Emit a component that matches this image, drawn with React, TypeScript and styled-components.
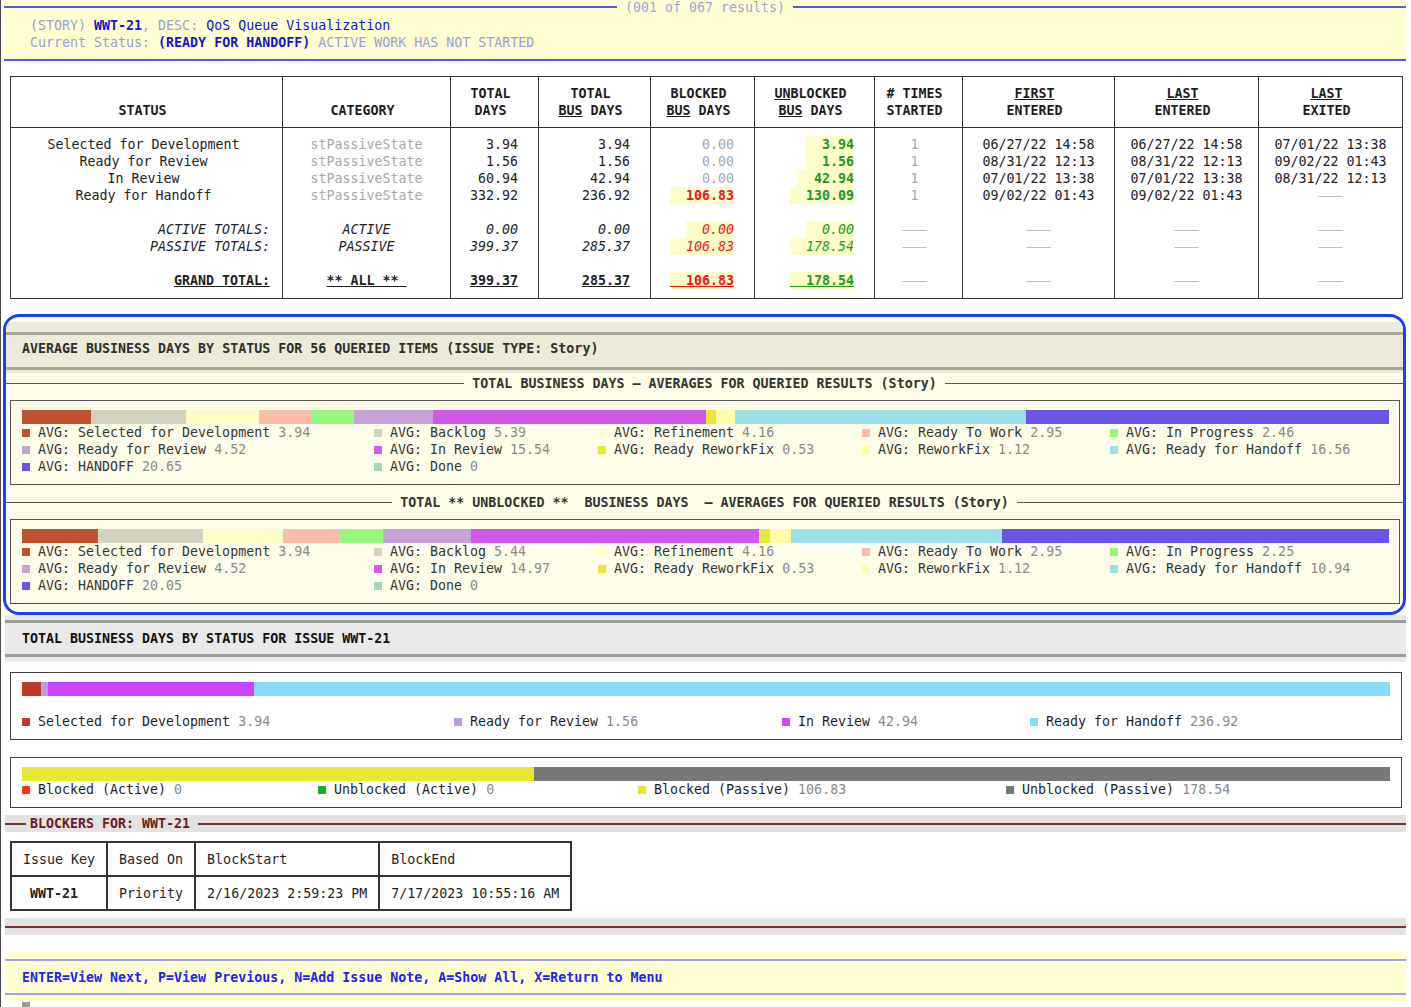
import React from "react";
import styled, { createGlobalStyle } from "styled-components";

const GlobalStyle = createGlobalStyle`
  html, body { margin: 0; padding: 0; background: #ffffff; overflow: hidden; }
  body {
    font-family: "DejaVu Sans Mono", "Liberation Mono", monospace;
    font-size: 13.3px;
    line-height: 17px;
    color: #222222;
  }
  *, *::before, *::after { box-sizing: border-box; }
`;

const Page = styled.div`
  width: 1411px;
  height: 1007px;
  overflow: hidden;
  border-left: 1px solid #4a4a4a;
  padding: 0 5px 0 3px;
`;

/* ---------- header ---------- */
const HeaderBand = styled.header`
  background: #ffffd3;
  padding-bottom: 3px;
`;
const ResultsRule = styled.div`
  display: flex;
  align-items: center;
  gap: 8px;
  height: 14px;
  color: #a3a3dc;
  white-space: pre;
  &::before, &::after {
    content: "";
    flex: 1 1 0;
    border-top: 2px solid #5a5ade;
  }
`;
const HeaderInfo = styled.div`
  padding: 2.5px 26px 8.5px;
  border-bottom: 2px solid #5a5ade;
  white-space: pre;
`;
const Dim = styled.span`
  color: #9d9dd6;
`;
const KeyText = styled.span`
  color: #1414cc;
  font-weight: bold;
`;
const BlueText = styled.span`
  color: #1414cc;
`;

/* ---------- stats table ---------- */
const StatsTable = styled.table`
  margin: 12px 0 0 6px;
  width: 1392px;
  table-layout: fixed;
  border-collapse: collapse;
  border: 1px solid #333;
  tbody tr:first-child td { padding-top: 8px; }
  tbody tr:last-child td { padding-bottom: 9px; }
`;
const HeadCell = styled.th`
  height: 51px;
  border: 1px solid #333;
  vertical-align: bottom;
  text-align: center;
  padding: 0 8px 8px 0;
  font-weight: bold;
  color: #1d1d1d;
`;
const U = styled.span`
  text-decoration: underline;
`;

type Align = "status" | "statusRight" | "center" | "num" | "times";
const BodyCell = styled.td<{ $align: Align }>`
  border-left: 1px solid #333;
  border-right: 1px solid #333;
  padding-top: 0;
  padding-bottom: 0;
  vertical-align: top;
  white-space: pre;
  text-align: ${(p) => (p.$align === "num" || p.$align === "statusRight" ? "right" : "center")};
  padding-left: ${(p) => (p.$align === "status" ? "6px" : "0")};
  padding-right: ${(p) =>
    p.$align === "num" ? "20px" : p.$align === "status" || p.$align === "statusRight" ? "12px" : p.$align === "times" ? "8px" : "0"};
`;

type Tone = "ink" | "gray" | "faint" | "red" | "green";
const toneColor: Record<Tone, string> = {
  ink: "#1f1f1f",
  gray: "#a8a8a8",
  faint: "#bdbdbd",
  red: "#ee1a1a",
  green: "#1f9b1f",
};
const Val = styled.span<{ $tone?: Tone; $bold?: boolean; $italic?: boolean; $ul?: boolean; $hl?: boolean }>`
  color: ${(p) => toneColor[p.$tone ?? "ink"]};
  font-weight: ${(p) => (p.$bold ? "bold" : "normal")};
  font-style: ${(p) => (p.$italic ? "italic" : "normal")};
  text-decoration: ${(p) => (p.$ul ? "underline" : "none")};
  background: ${(p) => (p.$hl ? "#fdfccb" : "transparent")};
  display: ${(p) => (p.$hl ? "inline-block" : "inline")};
`;

/* ---------- averages panel ---------- */
const AvgPanel = styled.section`
  margin: 15px 0 0 -1px;
  border: 3px solid #1c3ff2;
  border-radius: 16px;
  background: #fefdea;
  padding: 5px 0 8px;
  overflow: hidden;
`;
const AvgHeading = styled.div`
  background: #ecebdb;
  padding: 10px 0 3px;
`;
const AvgHeadingInner = styled.h2`
  margin: 0;
  font-size: inherit;
  border-top: 3px solid #a9a797;
  border-bottom: 3px solid #a9a797;
  padding: 5px 16px 10px;
  font-weight: bold;
  color: #2e2e2e;
  white-space: pre;
`;
const ChartTitle = styled.div<{ $top: number }>`
  display: flex;
  align-items: center;
  gap: 8px;
  margin: ${(p) => p.$top}px 0 8.5px;
  font-weight: bold;
  color: #333;
  white-space: pre;
  &::before, &::after {
    content: "";
    flex: 1 1 0;
    border-top: 1px solid #5a5a5a;
  }
`;
const ChartBox = styled.div`
  margin: 0 3px 0 4px;
  border: 1px solid #555;
  background: #fefdea;
  padding: 9px 10px 9px 11px;
`;
const Bar = styled.div`
  display: flex;
  height: 14px;
  width: 100%;
`;
const Segment = styled.div<{ $color: string }>`
  height: 100%;
  flex-basis: 0;
  min-width: 0;
  background: ${(p) => p.$color};
`;
const Legend = styled.div<{ $cols: string; $gap?: boolean }>`
  display: grid;
  grid-template-columns: ${(p) => p.$cols};
  margin-top: ${(p) => (p.$gap ? "17px" : "0")};
`;
const LegendItem = styled.div`
  display: flex;
  align-items: center;
  height: 17px;
  white-space: pre;
`;
const Swatch = styled.span<{ $color: string }>`
  flex: none;
  width: 8px;
  height: 8px;
  margin-right: 8px;
  background: ${(p) => p.$color};
`;
const LegendLabel = styled.span<{ $dark?: boolean }>`
  color: ${(p) => (p.$dark ? "#1f1f1f" : "#363636")};
`;
const LegendValue = styled.span`
  color: #8a8a8a;
`;

/* ---------- issue section ---------- */
const IssueHeading = styled.div`
  margin: 0 0 0 1px;
  background: #e9e9e9;
  padding: 5px 0;
`;
const IssueHeadingInner = styled.h2`
  margin: 0;
  font-size: inherit;
  border-top: 3px solid #9c9c9c;
  border-bottom: 3px solid #9c9c9c;
  padding: 6.5px 17px 7.5px;
  font-weight: bold;
  color: #111;
  white-space: pre;
`;
const IssueBox = styled.div<{ $top: number }>`
  margin: ${(p) => p.$top}px 4px 0 6px;
  border: 1px solid #444;
  background: #ffffff;
  padding: 9px 11px 9px 11px;
`;

/* ---------- blockers ---------- */
const BlockersRule = styled.div`
  margin: 7px 0 0 1px;
  height: 17px;
  background: #e2e2e2;
  display: flex;
  align-items: center;
  font-weight: bold;
  color: #6b1b1b;
  white-space: pre;
  &::before {
    content: "";
    flex: 0 0 21px;
    margin-right: 4px;
    border-top: 2px solid #7b3434;
  }
  &::after {
    content: "";
    flex: 1 1 0;
    margin-left: 8px;
    border-top: 2px solid #7b3434;
  }
`;
const BlockTable = styled.table`
  margin: 9px 0 0 6px;
  border-collapse: collapse;
  border: 2px solid #333;
`;
const BlockCell = styled.td<{ $key?: boolean }>`
  border: 2px solid #333;
  height: 34px;
  padding: ${(p) => (p.$key ? "0 11px 0 18px" : "0 11px 0 11px")};
  white-space: pre;
  text-align: left;
  font-weight: ${(p) => (p.$key ? "bold" : "normal")};
  color: #1f1f1f;
`;
const RuleBand = styled.div`
  margin: 7px 0 0 1px;
  height: 17px;
  background: #e2e2e2;
  display: flex;
  align-items: center;
  &::before {
    content: "";
    flex: 1 1 0;
    border-top: 2px solid #7b3434;
  }
`;

/* ---------- footer ---------- */
const FooterBand = styled.footer`
  margin: 16px 0 0 1px;
  background: #ffffd3;
  padding: 8px 0 7px;
`;
const FooterInner = styled.div`
  border-top: 2px solid #a2a2e2;
  border-bottom: 2px solid #a2a2e2;
  padding: 7.5px 17px;
  font-weight: bold;
  color: #2323ee;
  white-space: pre;
`;
const Cursor = styled.div`
  width: 8px;
  height: 8px;
  margin-left: 18px;
  background: #9a9a9a;
`;

/* ---------- data ---------- */
type Seg = { label: string; value: number; color: string };

const avgColors: { name: string; color: string }[] = [
  { name: "Selected for Development", color: "#c1522f" },
  { name: "Backlog", color: "#d3d1bf" },
  { name: "Refinement", color: "#fdfbc6" },
  { name: "Ready To Work", color: "#fbbca9" },
  { name: "In Progress", color: "#99f77f" },
  { name: "Ready for Review", color: "#c7a2d8" },
  { name: "In Review", color: "#ce5ae6" },
  { name: "Ready ReworkFix", color: "#e9e83a" },
  { name: "ReworkFix", color: "#fdfca9" },
  { name: "Ready for Handoff", color: "#9ee0e8" },
  { name: "HANDOFF", color: "#6b55e4" },
  { name: "Done", color: "#9fdcac" },
];
const avgTotal = [3.94, 5.39, 4.16, 2.95, 2.46, 4.52, 15.54, 0.53, 1.12, 16.56, 20.65, 0];
const avgUnblocked = [3.94, 5.44, 4.16, 2.95, 2.25, 4.52, 14.97, 0.53, 1.12, 10.94, 20.05, 0];

const makeAvg = (vals: number[]): Seg[] =>
  avgColors.map((c, i) => ({ label: "AVG: " + c.name, value: vals[i], color: c.color }));

const issueSegs: Seg[] = [
  { label: "Selected for Development", value: 3.94, color: "#c0392b" },
  { label: "Ready for Review", value: 1.56, color: "#bb99ee" },
  { label: "In Review", value: 42.94, color: "#cc44ff" },
  { label: "Ready for Handoff", value: 236.92, color: "#88ddfc" },
];
const blockSegs: Seg[] = [
  { label: "Blocked (Active)", value: 0, color: "#ff3322" },
  { label: "Unblocked (Active)", value: 0, color: "#22aa22" },
  { label: "Blocked (Passive)", value: 106.83, color: "#e8e833" },
  { label: "Unblocked (Passive)", value: 178.54, color: "#777777" },
];

const fmt = (v: number) => (v === 0 ? "0" : v.toFixed(2));

const Chart: React.FC<{ segs: Seg[]; cols: string; gap?: boolean; dark?: boolean }> = ({ segs, cols, gap, dark }) => (
  <>
    <Bar>
      {segs
        .filter((s) => s.value > 0)
        .map((s) => (
          <Segment key={s.label} $color={s.color} style={{ flexGrow: s.value }} />
        ))}
    </Bar>
    <Legend $cols={cols} $gap={gap}>
      {segs.map((s) => (
        <LegendItem key={s.label}>
          <Swatch $color={s.color} />
          <LegendLabel $dark={dark}>{s.label} </LegendLabel>
          <LegendValue>{fmt(s.value)}</LegendValue>
        </LegendItem>
      ))}
    </Legend>
  </>
);

const statusRows = [
  { status: "Selected for Development", total: "3.94", bus: "3.94", blocked: "0.00", bhl: false, unb: "3.94", first: "06/27/22 14:58", lastE: "06/27/22 14:58", lastX: "07/01/22 13:38" },
  { status: "Ready for Review", total: "1.56", bus: "1.56", blocked: "0.00", bhl: false, unb: "1.56", first: "08/31/22 12:13", lastE: "08/31/22 12:13", lastX: "09/02/22 01:43" },
  { status: "In Review", total: "60.94", bus: "42.94", blocked: "0.00", bhl: false, unb: "42.94", first: "07/01/22 13:38", lastE: "07/01/22 13:38", lastX: "08/31/22 12:13" },
  { status: "Ready for Handoff", total: "332.92", bus: "236.92", blocked: "106.83", bhl: true, unb: "130.09", first: "09/02/22 01:43", lastE: "09/02/22 01:43", lastX: "" },
];

const pad = (s: string) => "\u00a0\u00a0" + s;
const Dash = () => <Val $tone="faint">{"\u2013\u2013\u2013"}</Val>;

const SpacerRow = () => (
  <tr>
    <BodyCell $align="status">{"\u00a0"}</BodyCell>
    <BodyCell $align="center" />
    <BodyCell $align="num" />
    <BodyCell $align="num" />
    <BodyCell $align="num" />
    <BodyCell $align="num" />
    <BodyCell $align="times" />
    <BodyCell $align="center" />
    <BodyCell $align="center" />
    <BodyCell $align="center" />
  </tr>
);

const TotalsRow: React.FC<{ label: string; cat: string; total: string; bus: string; blocked: string; unb: string; grand?: boolean }> = ({
  label,
  cat,
  total,
  bus,
  blocked,
  unb,
  grand,
}) => (
  <tr>
    <BodyCell $align="statusRight">
      <Val $italic={!grand} $bold={grand} $ul={grand}>{label}</Val>
    </BodyCell>
    <BodyCell $align="center">
      <Val $italic={!grand} $bold={grand} $ul={grand}>{cat}</Val>
    </BodyCell>
    <BodyCell $align="num">
      <Val $italic={!grand} $bold={grand} $ul={grand}>{total}</Val>
    </BodyCell>
    <BodyCell $align="num">
      <Val $italic={!grand} $bold={grand} $ul={grand}>{bus}</Val>
    </BodyCell>
    <BodyCell $align="num">
      <Val $tone="red" $hl $italic={!grand} $bold={grand} $ul={grand}>{pad(blocked)}</Val>
    </BodyCell>
    <BodyCell $align="num">
      <Val $tone="green" $hl $italic={!grand} $bold={grand} $ul={grand}>{pad(unb)}</Val>
    </BodyCell>
    <BodyCell $align="times"><Dash /></BodyCell>
    <BodyCell $align="center"><Dash /></BodyCell>
    <BodyCell $align="center"><Dash /></BodyCell>
    <BodyCell $align="center"><Dash /></BodyCell>
  </tr>
);

export default function App() {
  return (
    <Page>
      <GlobalStyle />
      <HeaderBand>
        <ResultsRule>(001 of 067 results)</ResultsRule>
        <HeaderInfo>
          <div>
            <Dim>(STORY) </Dim>
            <KeyText>WWT-21</KeyText>
            <Dim>, DESC: </Dim>
            <BlueText>QoS Queue Visualization</BlueText>
          </div>
          <div>
            <Dim>Current Status: </Dim>
            <KeyText>(READY FOR HANDOFF)</KeyText>
            <Dim> ACTIVE WORK HAS NOT STARTED</Dim>
          </div>
        </HeaderInfo>
      </HeaderBand>

      <StatsTable>
        <colgroup>
          <col style={{ width: 272 }} />
          <col style={{ width: 168 }} />
          <col style={{ width: 88 }} />
          <col style={{ width: 112 }} />
          <col style={{ width: 104 }} />
          <col style={{ width: 120 }} />
          <col style={{ width: 88 }} />
          <col style={{ width: 152 }} />
          <col style={{ width: 144 }} />
          <col style={{ width: 144 }} />
        </colgroup>
        <thead>
          <tr>
            <HeadCell>STATUS</HeadCell>
            <HeadCell>CATEGORY</HeadCell>
            <HeadCell>TOTAL<br />DAYS</HeadCell>
            <HeadCell>TOTAL<br /><U>BUS</U> DAYS</HeadCell>
            <HeadCell>BLOCKED<br /><U>BUS</U> DAYS</HeadCell>
            <HeadCell><U>UN</U>BLOCKED<br /><U>BUS</U> DAYS</HeadCell>
            <HeadCell># TIMES<br />STARTED</HeadCell>
            <HeadCell><U>FIRST</U><br />ENTERED</HeadCell>
            <HeadCell><U>LAST</U><br />ENTERED</HeadCell>
            <HeadCell><U>LAST</U><br />EXITED</HeadCell>
          </tr>
        </thead>
        <tbody>
          {statusRows.map((r) => (
            <tr key={r.status}>
              <BodyCell $align="status">{r.status}</BodyCell>
              <BodyCell $align="center"><Val $tone="gray">stPassiveState</Val></BodyCell>
              <BodyCell $align="num">{r.total}</BodyCell>
              <BodyCell $align="num">{r.bus}</BodyCell>
              <BodyCell $align="num">
                {r.bhl ? (
                  <Val $tone="red" $bold $hl>{pad(r.blocked)}</Val>
                ) : (
                  <Val $tone="gray">{r.blocked}</Val>
                )}
              </BodyCell>
              <BodyCell $align="num">
                <Val $tone="green" $bold $hl>{pad(r.unb)}</Val>
              </BodyCell>
              <BodyCell $align="times"><Val $tone="gray">1</Val></BodyCell>
              <BodyCell $align="center">{r.first}</BodyCell>
              <BodyCell $align="center">{r.lastE}</BodyCell>
              <BodyCell $align="center">{r.lastX ? r.lastX : <Dash />}</BodyCell>
            </tr>
          ))}
          <SpacerRow />
          <TotalsRow label="ACTIVE TOTALS:" cat="ACTIVE" total="0.00" bus="0.00" blocked="0.00" unb="0.00" />
          <TotalsRow label="PASSIVE TOTALS:" cat="PASSIVE" total="399.37" bus="285.37" blocked="106.83" unb="178.54" />
          <SpacerRow />
          <TotalsRow label="GRAND TOTAL:" cat={"** ALL **\u00a0"} total="399.37" bus="285.37" blocked="106.83" unb="178.54" grand />
        </tbody>
      </StatsTable>

      <AvgPanel>
        <AvgHeading>
          <AvgHeadingInner>AVERAGE BUSINESS DAYS BY STATUS FOR 56 QUERIED ITEMS (ISSUE TYPE: Story)</AvgHeadingInner>
        </AvgHeading>
        <ChartTitle $top={1.5}>TOTAL BUSINESS DAYS – AVERAGES FOR QUERIED RESULTS (Story)</ChartTitle>
        <ChartBox>
          <Chart segs={makeAvg(avgTotal)} cols="352px 224px 264px 248px 1fr" />
        </ChartBox>
        <ChartTitle $top={8.5}>{"TOTAL ** UNBLOCKED **  BUSINESS DAYS  – AVERAGES FOR QUERIED RESULTS (Story)"}</ChartTitle>
        <ChartBox>
          <Chart segs={makeAvg(avgUnblocked)} cols="352px 224px 264px 248px 1fr" />
        </ChartBox>
      </AvgPanel>

      <IssueHeading>
        <IssueHeadingInner>TOTAL BUSINESS DAYS BY STATUS FOR ISSUE WWT-21</IssueHeadingInner>
      </IssueHeading>
      <IssueBox $top={10}>
        <Chart segs={issueSegs} cols="432px 328px 248px 1fr" gap dark />
      </IssueBox>
      <IssueBox $top={17}>
        <Chart segs={blockSegs} cols="296px 320px 368px 1fr" dark />
      </IssueBox>

      <BlockersRule>BLOCKERS FOR: WWT-21</BlockersRule>
      <BlockTable>
        <tbody>
          <tr>
            <BlockCell>Issue Key</BlockCell>
            <BlockCell>Based On</BlockCell>
            <BlockCell>BlockStart</BlockCell>
            <BlockCell>BlockEnd</BlockCell>
          </tr>
          <tr>
            <BlockCell $key>WWT-21</BlockCell>
            <BlockCell>Priority</BlockCell>
            <BlockCell>2/16/2023 2:59:23 PM</BlockCell>
            <BlockCell>7/17/2023 10:55:16 AM</BlockCell>
          </tr>
        </tbody>
      </BlockTable>
      <RuleBand />

      <FooterBand>
        <FooterInner>ENTER=View Next, P=View Previous, N=Add Issue Note, A=Show All, X=Return to Menu</FooterInner>
      </FooterBand>
      <Cursor />
    </Page>
  );
}
